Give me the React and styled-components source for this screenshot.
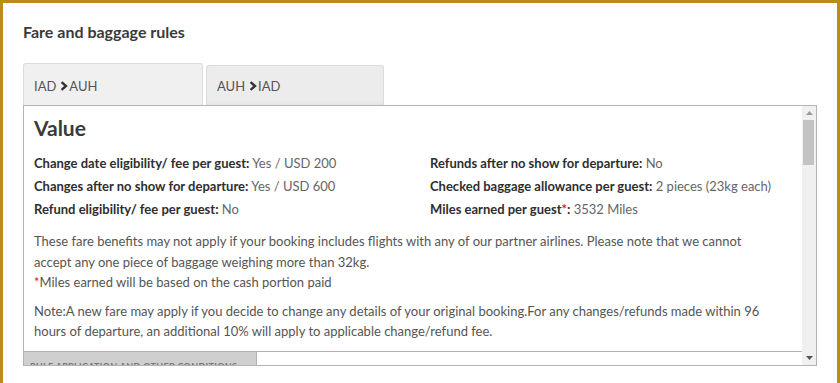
import styled, { createGlobalStyle } from "styled-components";

const GlobalStyle = createGlobalStyle`
    html, body {
        margin: 0;
        padding: 0;
        background: #fff;
        font-family: Lato, "Noto Sans", sans-serif;
        color: #333;
    }
`;

const Frame = styled.div`
    width: 840px;
    height: 383px;
    box-sizing: border-box;
    border: 3px solid #bd8b1b;
    border-bottom: none;
    padding: 19px 0 0 20px;
    overflow: hidden;
`;

const Title = styled.h2`
    margin: 0 0 21px;
    font-size: 16px;
    line-height: 20px;
    font-weight: 700;
    color: #3a3a3a;
`;

const Tabs = styled.div`
    display: flex;
    align-items: flex-end;
    gap: 3px;
    width: 794px;
`;

const Tab = styled.div`
    box-sizing: border-box;
    width: ${(p) => (p.$active ? "180px" : "178px")};
    height: ${(p) => (p.$active ? "42px" : "40px")};
    padding: ${(p) => (p.$active ? "2px" : "0")} 10px 0;
    display: flex;
    align-items: center;
    font-size: 13px;
    color: #555;
    background: ${(p) => (p.$active ? "#f0f0f0" : "#ececec")};
    border: 1px solid #dcdcdc;
    border-bottom: none;
    border-radius: 3px 3px 0 0;
    box-shadow: ${(p) => (p.$active ? "none" : "inset 0 -3px 4px -2px #e2e2e2")};

    svg {
        margin: 0 1px 0 4px;
    }
`;

const ScrollBox = styled.div`
    box-sizing: border-box;
    width: 794px;
    height: 261px;
    border: 1px solid #b4b4b4;
    display: flex;
`;

const Content = styled.div`
    flex: 1;
    min-width: 0;
    overflow: hidden;
`;

const Scrollbar = styled.div`
    width: 14px;
    flex: none;
    background: #f0f0f0;
    display: flex;
    flex-direction: column;
`;

const ArrowButton = styled.div`
    height: 14px;
    display: flex;
    align-items: center;
    justify-content: center;
`;

const Thumb = styled.div`
    height: 45px;
    margin: 0 2px 0 1px;
    background: #c3c3c3;
`;

const Track = styled.div`
    flex: 1;
`;

const Panel = styled.div`
    padding: 10px 10px 9px;
    border-bottom: 1px solid #b4b4b4;
`;

const Heading = styled.h3`
    margin: 0 0 12px;
    font-size: 21px;
    line-height: 24px;
    font-weight: 700;
    color: #3a3a3a;
`;

const Grid = styled.div`
    display: grid;
    grid-template-columns: 396px 1fr;
    grid-auto-flow: column;
    grid-template-rows: repeat(3, 23px);
    font-size: 13px;
    line-height: 23px;
`;

const Label = styled.span`
    color: #2e2e2e;
    font-weight: 700;
`;

const Val = styled.span`
    color: #666;
`;

const Star = styled.span`
    color: #e0201c;
`;

const Para = styled.p`
    margin: ${(p) => p.$mt} 0 0;
    font-size: 13px;
    line-height: 20.5px;
    color: #555;
`;

const SubTabs = styled.div`
    display: flex;
`;

const SubTab = styled.div`
    box-sizing: border-box;
    width: 233px;
    padding: 9px 6px;
    font-size: 9px;
    font-weight: 700;
    letter-spacing: 0.3px;
    white-space: nowrap;
    text-transform: uppercase;
    color: #777;
    background: #cfcfcf;
    border-right: 1px solid #b4b4b4;
`;

const Chevron = () => (
    <svg width="8" height="10" viewBox="0 0 8 10">
        <path d="M1.6 1.2 L6 5 L1.6 8.8" fill="none" stroke="#333" strokeWidth="2.4" />
    </svg>
);

const Triangle = ({ up, color }) => (
    <svg width="7" height="4" viewBox="0 0 7 4">
        <path d={up ? "M0 4 L3.5 0 L7 4 Z" : "M0 0 L3.5 4 L7 0 Z"} fill={color} />
    </svg>
);

const rows = [
    ["Change date eligibility/ fee per guest:", "Yes / USD 200"],
    ["Changes after no show for departure:", "Yes / USD 600"],
    ["Refund eligibility/ fee per guest:", "No"],
    ["Refunds after no show for departure:", "No"],
    ["Checked baggage allowance per guest:", "2 pieces (23kg each)"],
];

const App = () => {
    return (
        <Frame>
            <GlobalStyle />
            <Title>Fare and baggage rules</Title>
            <Tabs>
                <Tab $active>
                    IAD<Chevron />AUH
                </Tab>
                <Tab>
                    AUH<Chevron />IAD
                </Tab>
            </Tabs>
            <ScrollBox>
                <Content>
                    <Panel>
                        <Heading>Value</Heading>
                        <Grid>
                            {rows.map(([l, v]) => (
                                <div key={l}>
                                    <Label>{l}</Label> <Val>{v}</Val>
                                </div>
                            ))}
                            <div>
                                <Label>
                                    Miles earned per guest<Star>*</Star>:
                                </Label>{" "}
                                <Val>3532 Miles</Val>
                            </div>
                        </Grid>
                        <Para $mt="10px">
                            These fare benefits may not apply if your booking includes flights with any of our partner airlines. Please note that we cannot
                            <br />
                            accept any one piece of baggage weighing more than 32kg.
                            <br />
                            <Star>*</Star>Miles earned will be based on the cash portion paid
                        </Para>
                        <Para $mt="8px">
                            Note:A new fare may apply if you decide to change any details of your original booking.For any changes/refunds made within 96
                            <br />
                            hours of departure, an additional 10% will apply to applicable change/refund fee.
                        </Para>
                    </Panel>
                    <SubTabs>
                        <SubTab>Rule application and other conditions</SubTab>
                    </SubTabs>
                </Content>
                <Scrollbar>
                    <ArrowButton>
                        <Triangle up color="#9a9a9a" />
                    </ArrowButton>
                    <Thumb />
                    <Track />
                    <ArrowButton>
                        <Triangle color="#555" />
                    </ArrowButton>
                </Scrollbar>
            </ScrollBox>
        </Frame>
    );
};

export default App;
